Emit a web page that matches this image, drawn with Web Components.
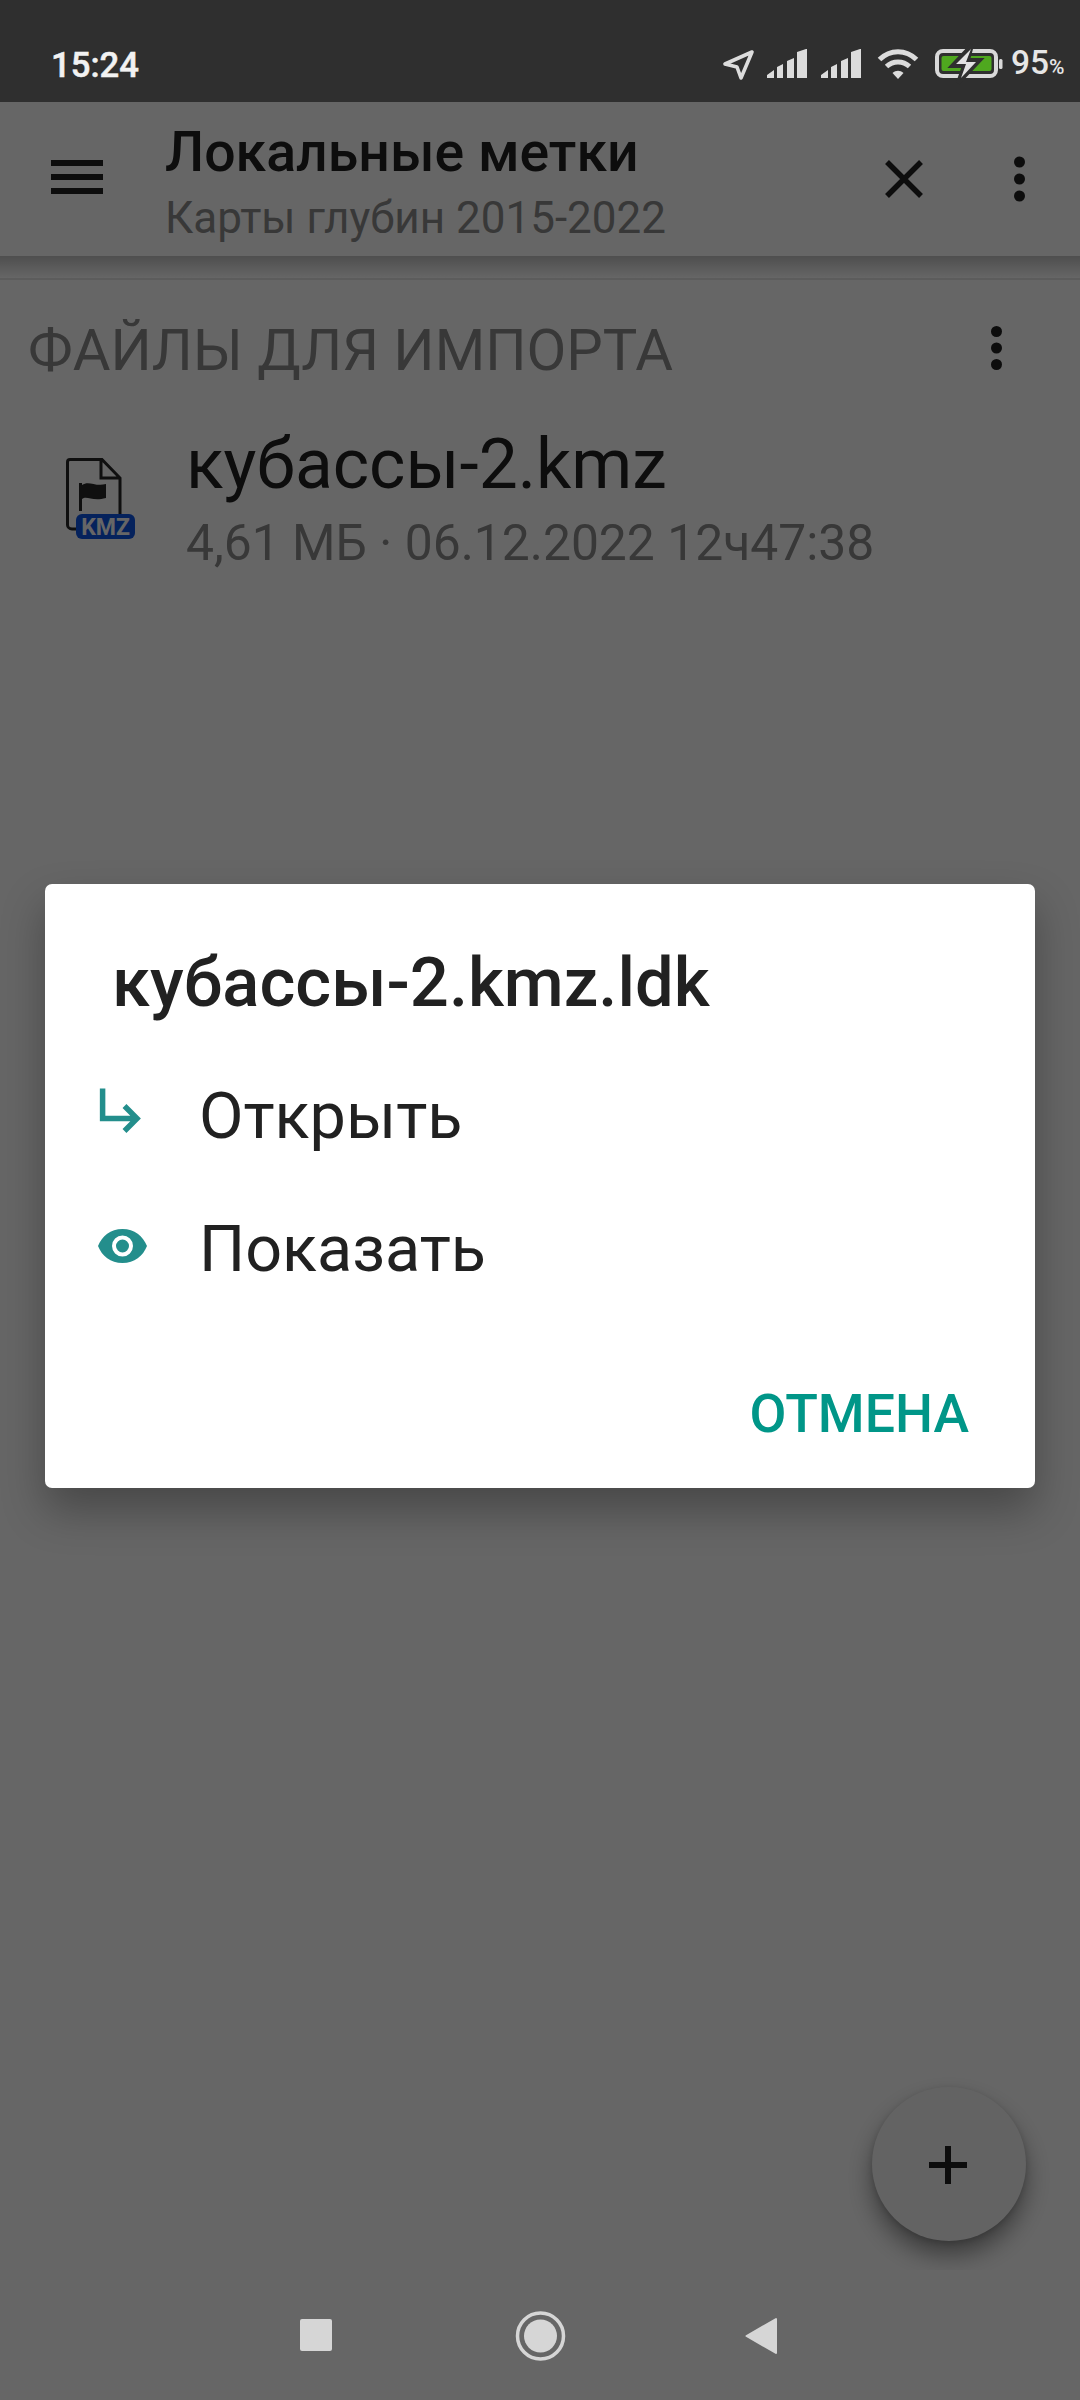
<!DOCTYPE html>
<html lang="ru"><head><meta charset="utf-8"><title>Локальные метки</title>
<style>
html,body{margin:0;padding:0;background:#fff}
body{font-family:Roboto,"Noto Sans",sans-serif;color:#212121}
</style></head><body>
<x-app>
  <x-status-bar slot="status"></x-status-bar>
  <x-app-bar slot="content" title-text="Локальные метки" subtitle="Карты глубин 2015-2022"></x-app-bar>
  <x-section-head slot="content">ФАЙЛЫ ДЛЯ ИМПОРТА</x-section-head>
  <x-file-row slot="content" name="кубассы-2.kmz" meta="4,61 МБ · 06.12.2022 12ч47:38"></x-file-row>
  <x-fab slot="fab"></x-fab>
  <x-dialog slot="dialog" heading="кубассы-2.kmz.ldk">
    <x-dialog-item icon="open">Открыть</x-dialog-item>
    <x-dialog-item icon="eye">Показать</x-dialog-item>
    <span slot="action">ОТМЕНА</span>
  </x-dialog>
  <x-nav-bar slot="nav"></x-nav-bar>
</x-app>
<script>
function def(name, html){
  customElements.define(name, class extends HTMLElement{
    connectedCallback(){
      if(this.shadowRoot) return;
      const r=this.attachShadow({mode:'open'});
      r.innerHTML=typeof html==='function'?html(this):html;
    }
  });
}
def('x-app',`<style>
:host{display:block;position:relative;width:1080px;height:2400px;overflow:hidden;background:#fff}
.col{display:flex;flex-direction:column;height:100%}
.body{flex:1;display:flex;flex-direction:column}
.scrim{position:absolute;left:0;right:0;top:0;bottom:0;background:rgba(0,0,0,.6);display:flex;justify-content:center;align-items:flex-start;padding-top:884px;box-sizing:border-box}
.top{position:relative;z-index:2}
.fab{position:absolute;left:872px;top:2087px}
</style>
<div class="col">
  <div class="top"><slot name="status"></slot></div>
  <div class="body"><slot name="content"></slot></div>
  <div class="top"><slot name="nav"></slot></div>
</div>
<div class="fab"><slot name="fab"></slot></div>
<div class="scrim"><slot name="dialog"></slot></div>`);

def('x-status-bar',`<style>
:host{display:flex;align-items:flex-start;height:102px;background:#2f2f2f;color:#f2f2f2;box-sizing:border-box;padding:48px 0 0 51px;position:relative}
.t{font:500 34.700px/1 Roboto,sans-serif;-webkit-text-stroke:.5px #f2f2f2}
svg{display:block;position:absolute;right:0;top:0}
.p{position:absolute;left:1011px;top:46px;font:500 33.500px/1 Roboto,sans-serif;color:#e6e6e6;white-space:nowrap}
.p small{font-size:21px}
</style>
<span class="t">15:24</span>
<svg width="360" height="102" viewBox="720 0 360 102">
  <path d="M752 52 725 64 737 67 741 78Z" fill="none" stroke="#dcdcdc" stroke-width="3.600" stroke-linejoin="round"/>
  <g fill="#dcdcdc">
    <path d="M767 78v-3l7-5v8zM777 78V67l6-3v14zM787 78V61l7-3v20zM797 78V52l9-3h1v29z" />
    <path d="M821 78v-3l7-5v8zM831 78V67l6-3v14zM841 78V61l7-3v20zM851 78V52l9-3h1v29z" />
    <path d="M892.500 73c3.500-3 7.500-3 11 0l-5.500 6z"/>
  </g>
  <path d="M879.500 59.500C890 49 906 49 916.500 59.500M886.500 66.500C893 60.500 903 60.500 909.500 66.500" fill="none" stroke="#dcdcdc" stroke-width="5"/>
  <rect x="937" y="51" width="59" height="25" rx="6" fill="none" stroke="#d9d9d9" stroke-width="4"/>
  <rect x="941.500" y="56" width="50" height="15" rx="2" fill="#4fa81f"/>
  <path d="M972 45 952 66H964L958 83 980 60H968Z" fill="#2f2f2f" stroke="#2f2f2f" stroke-width="4"/>
  <path d="M971 49 956 64H966L961 78 976 62H966Z" fill="#e2e2e2"/>
  <rect x="999" y="59" width="3.500" height="10" rx="1.500" fill="#d9d9d9"/>
</svg>
<span class="p">95<small>%</small></span>`);

def('x-app-bar',h=>`<style>
:host{display:flex;align-items:flex-start;position:relative;height:154px;background:#fff;padding-left:51px;box-sizing:border-box}
.b{width:52px;display:flex;flex-direction:column;gap:8px;margin-top:58px}
.b i{display:block;height:6px;background:#212121}
.tx{margin-left:62px;margin-top:20px;display:flex;flex-direction:column;flex:1}
.a{font:500 55.400px/62px Roboto,sans-serif;color:#212121;white-space:nowrap}
.s{font:400 44px/52px Roboto,sans-serif;color:#8c8c8c;white-space:nowrap;margin-top:8px}
svg{display:block}
.i{display:flex;align-items:center;gap:90px;padding-right:55px;margin-top:54px}
</style>
<div class="b"><i></i><i></i><i></i></div>
<div class="tx"><span class="a">${h.getAttribute('title-text')}</span><span class="s">${h.getAttribute('subtitle')}</span></div>
<div class="i">
<svg width="40" height="40" viewBox="0 0 40 40"><path d="M3 3 37 37M37 3 3 37" stroke="#212121" stroke-width="5.500"/></svg>
<svg width="11" height="46" viewBox="0 0 11 46"><circle cx="5.500" cy="6" r="5.500" fill="#212121"/><circle cx="5.500" cy="23" r="5.500" fill="#212121"/><circle cx="5.500" cy="40" r="5.500" fill="#212121"/></svg>
</div>`);

def('x-section-head',`<style>
:host{display:flex;align-items:flex-start;box-sizing:border-box;height:134px;padding:66px 78px 0 28px;font:400 57.900px/1 Roboto,sans-serif;color:#8c8c8c;position:relative;background:linear-gradient(#c4c4c4,#fff 22px,#e6e6e6 22px,#e6e6e6 24px,#fff 24px);white-space:nowrap}
span{flex:1}
svg{display:block;margin-top:3.500px}
</style><span><slot></slot></span>
<svg width="11" height="44" viewBox="0 0 11 44"><circle cx="5.500" cy="5.500" r="5.500" fill="#212121"/><circle cx="5.500" cy="22" r="5.500" fill="#212121"/><circle cx="5.500" cy="38.500" r="5.500" fill="#212121"/></svg>`);

def('x-file-row',h=>`<style>
:host{display:flex;align-items:flex-start;box-sizing:border-box;height:200px;padding-left:66px;position:relative}
svg{display:block;margin-top:68px;flex:none}
.t{margin-left:51px;display:flex;flex-direction:column;margin-top:38.500px;white-space:nowrap}
.n{font:400 69.500px/72px Roboto,sans-serif;color:#212121}
.m{font:400 49.800px/56px Roboto,sans-serif;color:#8c8c8c;margin-top:14.500px}
</style>
<svg width="69" height="82" viewBox="0 0 69 82">
  <path d="M4 0.500H35L54 20V60M10 71H6C3.500 71 1.500 69 1.500 67V4C1.500 2 3 1.500 4 1.500H35V20H54" fill="none" stroke="#262626" stroke-width="3"/>
  <path d="M14 27V53H17V41C22 37 27 44 41 40V26C30 29 24 22 17 27V25H14Z" fill="#262626" transform="translate(-1 0)"/>
  <rect x="10" y="56" width="59" height="25" rx="6" fill="#0d55e6"/>
  <text x="39.500" y="76.500" text-anchor="middle" font-family="Roboto,sans-serif" font-weight="700" font-size="23" fill="#fff">KMZ</text>
</svg>
<div class="t"><span class="n">${h.getAttribute('name')}</span><span class="m">${h.getAttribute('meta')}</span></div>`);

def('x-fab',`<style>
:host{display:flex;align-items:center;justify-content:center;width:154px;height:154px;border-radius:50%;background:#f8f8f8;box-shadow:0 14px 24px rgba(0,0,0,.42),0 2px 6px rgba(0,0,0,.15)}
svg{display:block;position:relative;left:-1px;top:1px}
</style><svg width="38" height="38" viewBox="0 0 38 38"><path d="M19 0V38M0 19H38" stroke="#212121" stroke-width="6"/></svg>`);

def('x-dialog',h=>`<style>
:host{display:flex;flex-direction:column;box-sizing:border-box;width:990px;height:604px;background:#fff;border-radius:7px;box-shadow:0 22px 44px rgba(0,0,0,.3);color:#212121}
.h{font:500 68.750px/1 Roboto,sans-serif;padding:65px 0 0 67px;height:165.500px;box-sizing:border-box;white-space:nowrap}
.l{display:flex;flex-direction:column}
.a{margin-top:auto;align-self:flex-end;padding:0 66px 47.500px 0;font:500 53.600px/1 Roboto,sans-serif;color:#009688}
</style>
<div class="h">${h.getAttribute('heading')}</div>
<div class="l"><slot></slot></div>
<div class="a"><slot name="action"></slot></div>`);

const icons={
 open:`<svg width="52" height="50" viewBox="0 0 52 50"><path d="M5.600 0.500V30.500H40M27.500 18 40 30.500 27.500 43" fill="none" stroke="#238e8c" stroke-width="5.500"/></svg>`,
 eye:`<svg width="52" height="50" viewBox="0 0 52 50"><path fill-rule="evenodd" transform="translate(-.5 0)" d="M26 8C14 8 5.500 15 1.500 25 5.500 35 14 42 26 42S46.500 35 50.500 25C46.500 15 38 8 26 8ZM26 14.500A10.500 10.500 0 1 1 26 35.500 10.500 10.500 0 1 1 26 14.500ZM26 18.500A6.500 6.500 0 1 0 26 31.500 6.500 6.500 0 1 0 26 18.500Z" fill="#238e8c"/></svg>`
};
def('x-dialog-item',h=>`<style>
:host{display:flex;align-items:center;height:133px;padding-left:52px;font:400 64.700px/1 Roboto,sans-serif;color:#212121}
svg{display:block;margin-top:-6px}
.w{width:102px;flex:none}
</style><div class="w">${icons[h.getAttribute('icon')]}</div><slot></slot>`);

def('x-nav-bar',`<style>
:host{position:absolute;left:0;right:0;bottom:0;display:block;height:130px;background:#666}
svg{display:block}
</style>
<svg width="1080" height="130" viewBox="0 2270 1080 130">
  <rect x="300" y="2319" width="32" height="32" rx="2" fill="#d6d6d6"/>
  <circle cx="540.500" cy="2336" r="23" fill="none" stroke="#d6d6d6" stroke-width="3.500"/>
  <circle cx="540.500" cy="2336" r="16.500" fill="#d6d6d6"/>
  <path d="M776 2319V2353L746.500 2336Z" fill="#d6d6d6" stroke="#d6d6d6" stroke-width="2" stroke-linejoin="round"/>
</svg>`);
</script>
</body></html>
